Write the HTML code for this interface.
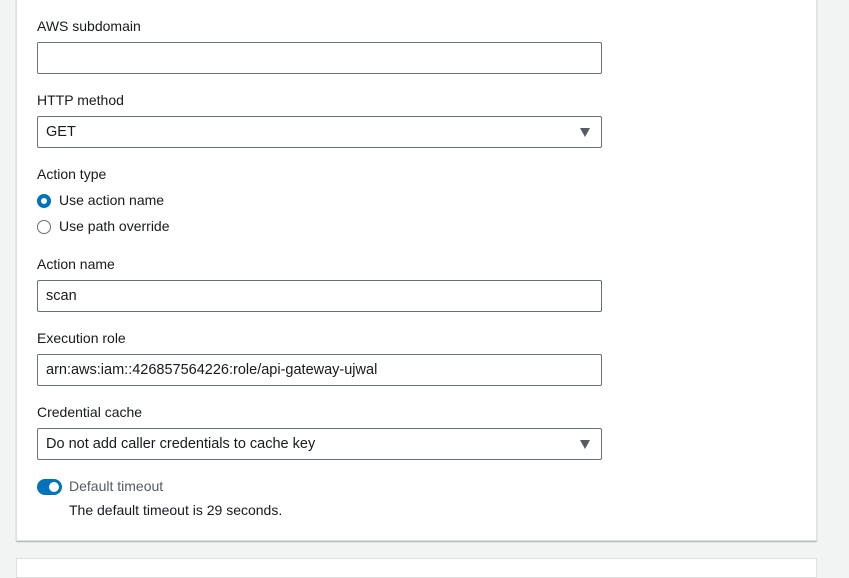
<!DOCTYPE html>
<html><head><meta charset="utf-8"><style>
*{box-sizing:border-box;margin:0;padding:0}
body{width:849px;height:560px;background:#f2f3f3;font-family:"Liberation Sans",sans-serif;color:#16191f;position:relative;overflow:hidden}
.panel{position:absolute;left:16px;top:-5px;width:801px;height:546px;background:#fff;border:1px solid #e0e0e0;box-shadow:0 1px 1px rgba(0,28,36,.3)}
.panel2{position:absolute;left:16px;top:558px;width:801px;height:20px;background:#fff;border:1px solid #e0e0e0}
.lbl{position:absolute;left:37px;font-size:14px;color:#16191f}
.inp{position:absolute;left:37px;width:565px;height:32px;border:1px solid #687078;border-radius:2px;font-size:14.5px;line-height:30px;padding-left:8px;background:#fff}
.arr{position:absolute;right:11px;top:11px;width:0;height:0;border-left:5px solid transparent;border-right:5px solid transparent;border-top:9px solid #545b64}
.radio{position:absolute;left:37px;width:14px;height:14px;border-radius:50%}
.rt{position:absolute;left:59px;font-size:14px;color:#16191f}
</style></head><body>
<div class="panel"></div>
<div class="panel2"></div>

<div class="lbl" style="top:18px">AWS subdomain</div>
<div class="inp" style="top:42px"></div>

<div class="lbl" style="top:92px">HTTP method</div>
<div class="inp" style="top:116px">GET<div class="arr"></div></div>

<div class="lbl" style="top:166px">Action type</div>
<div class="radio" style="top:194px;background:#fff;border:4px solid #0073bb"></div>
<div class="rt" style="top:192px">Use action name</div>
<div class="radio" style="top:220px;border:1.5px solid #687078"></div>
<div class="rt" style="top:218px">Use path override</div>

<div class="lbl" style="top:256px">Action name</div>
<div class="inp" style="top:280px">scan</div>

<div class="lbl" style="top:330px">Execution role</div>
<div class="inp" style="top:354px">arn:aws:iam::426857564226:role/api-gateway-ujwal</div>

<div class="lbl" style="top:404px">Credential cache</div>
<div class="inp" style="top:428px">Do not add caller credentials to cache key<div class="arr"></div></div>

<div style="position:absolute;left:37px;top:479px;width:25px;height:16px;border-radius:8px;background:#0073bb"><div style="position:absolute;right:3px;top:3px;width:10px;height:10px;border-radius:50%;background:#fff"></div></div>
<div style="position:absolute;left:69px;top:478px;font-size:14px;color:#545b64">Default timeout</div>
<div style="position:absolute;left:69px;top:502px;font-size:14px;color:#16191f">The default timeout is 29 seconds.</div>
</body></html>
